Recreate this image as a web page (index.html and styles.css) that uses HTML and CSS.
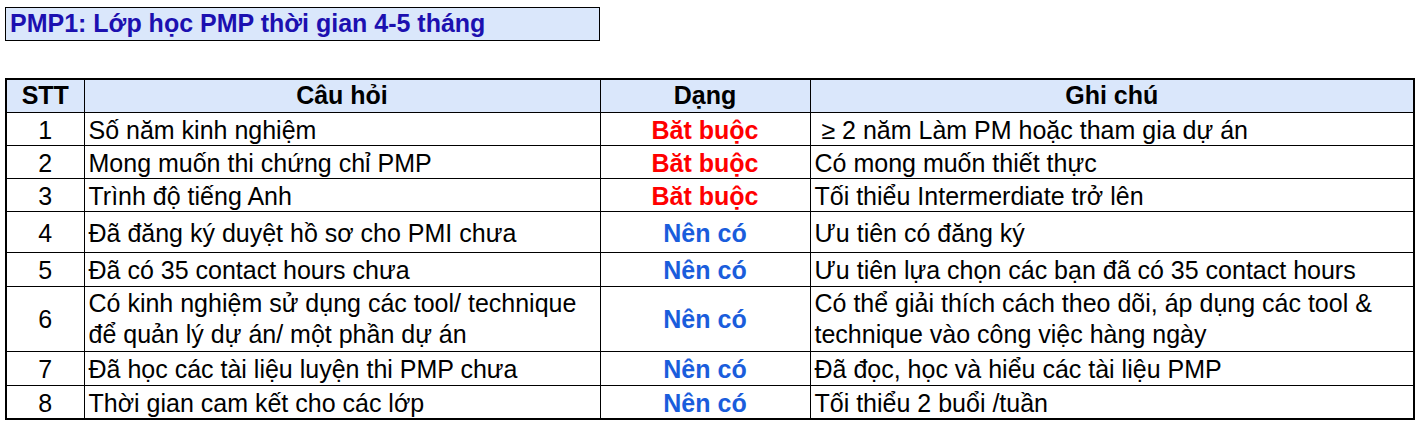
FILE: index.html
```html
<!DOCTYPE html>
<html lang="vi">
<head>
<meta charset="utf-8">
<title>PMP1</title>
<link rel="stylesheet" href="styles.css">
</head>
<body>
<div class="page">
  <div class="title">PMP1: Lớp học PMP thời gian 4-5 tháng</div>
  <table class="grid">
    <colgroup>
      <col class="c-stt"><col class="c-q"><col class="c-type"><col class="c-note">
    </colgroup>
    <thead>
      <tr class="h33"><th>STT</th><th>Câu hỏi</th><th>Dạng</th><th>Ghi chú</th></tr>
    </thead>
    <tbody>
      <tr class="h33"><td class="num">1</td><td class="txt">Số năm kinh nghiệm</td><td class="req">Băt buộc</td><td class="txt">&nbsp;≥ 2 năm Làm PM hoặc tham gia dự án</td></tr>
      <tr class="h33"><td class="num">2</td><td class="txt">Mong muốn thi chứng chỉ PMP</td><td class="req">Băt buộc</td><td class="txt">Có mong muốn thiết thực</td></tr>
      <tr class="h33"><td class="num">3</td><td class="txt">Trình độ tiếng Anh</td><td class="req">Băt buộc</td><td class="txt">Tối thiểu Intermerdiate trở lên</td></tr>
      <tr class="h41"><td class="num">4</td><td class="txt">Đã đăng ký duyệt hồ sơ cho PMI chưa</td><td class="opt">Nên có</td><td class="txt">Ưu tiên có đăng ký</td></tr>
      <tr class="h34"><td class="num">5</td><td class="txt">Đã có 35 contact hours chưa</td><td class="opt">Nên có</td><td class="txt">Ưu tiên lựa chọn các bạn đã có 35 contact hours</td></tr>
      <tr class="h65"><td class="num">6</td><td class="txt">Có kinh nghiệm sử dụng các tool/ technique<br>để quản lý dự án/ một phần dự án</td><td class="opt">Nên có</td><td class="txt">Có thể giải thích cách theo dõi, áp dụng các tool &amp;<br>technique vào công việc hàng ngày</td></tr>
      <tr class="h34"><td class="num">7</td><td class="txt">Đã học các tài liệu luyện thi PMP chưa</td><td class="opt">Nên có</td><td class="txt">Đã đọc, học và hiểu các tài liệu PMP</td></tr>
      <tr class="h34"><td class="num">8</td><td class="txt">Thời gian cam kết cho các lớp</td><td class="opt">Nên có</td><td class="txt">Tối thiểu 2 buổi /tuần</td></tr>
    </tbody>
  </table>
</div>
</body>
</html>
```

FILE: styles.css
```css
html, body {
  margin: 0;
  padding: 0;
  background: #ffffff;
}
.page {
  padding: 7px 0 0 5px;
  font-family: "Liberation Sans", Arial, sans-serif;
  color: #000;
}
.title {
  box-sizing: border-box;
  width: 595px;
  height: 34px;
  border: 1px solid #000;
  background: #dae7fb;
  color: #1c10b0;
  font-weight: bold;
  font-size: 25px;
  line-height: 31px;
  padding-left: 4px;
  white-space: nowrap;
}
.grid {
  margin-top: 37px;
  border-collapse: collapse;
  table-layout: fixed;
  width: 1408px;
  border: 2px solid #000;
  font-size: 25px;
}
.c-stt { width: 78px; }
.c-q { width: 516px; }
.c-type { width: 210px; }
.c-note { width: 604px; }
.grid th, .grid td {
  border: 1px solid #000;
  padding: 0 4px;
  vertical-align: middle;
  white-space: nowrap;
  line-height: 31px;
}
.grid td {
  padding-top: 2px;
  line-height: 28px;
}
.grid th {
  background: #dae7fb;
  font-weight: bold;
  text-align: center;
}
.h33 { height: 33px; }
.h34 { height: 34px; }
.h41 { height: 41px; }
.h65 { height: 65px; }
.grid .h65 td { line-height: 31px; padding-top: 1px; }
.num { text-align: center; }
.txt { text-align: left; }
.req {
  text-align: center;
  color: #ff0000;
  font-weight: bold;
}
.opt {
  text-align: center;
  color: #1a5ddc;
  font-weight: bold;
}
```
